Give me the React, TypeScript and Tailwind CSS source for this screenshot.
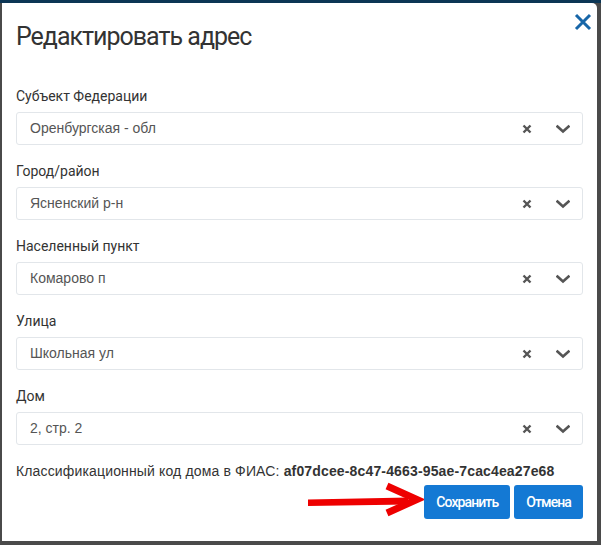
import React from "react";

const fields = [
  { label: "Субъект Федерации", value: "Оренбургская - обл" },
  { label: "Город/район", value: "Ясненский р-н" },
  { label: "Населенный пункт", value: "Комарово п" },
  { label: "Улица", value: "Школьная ул" },
  { label: "Дом", value: "2, стр. 2" },
];

const Chevron = () => (
  <svg width="14" height="10" viewBox="0 0 14 10">
    <path d="M1.5 2.5 L7 7.5 L12.5 2.5" fill="none" stroke="#555" strokeWidth="2.6" strokeLinecap="square" />
  </svg>
);

const Clear = () => (
  <svg width="10" height="10" viewBox="0 0 10 10">
    <path d="M1.5 1.5 L8.5 8.5 M8.5 1.5 L1.5 8.5" stroke="#555" strokeWidth="2.4" />
  </svg>
);

const Field = ({ label, value }: { label: string; value: string }) => (
  <div className="flex flex-col">
    <div className="h-5 text-[14px] leading-5 text-[#333] font-['Roboto',sans-serif]">{label}</div>
    <div className="mt-[6px] h-[33px] flex items-center rounded-[3px] border border-[#e2e6ea] pl-[13px] pr-[12px]">
      <span className="flex-1 text-[14px] text-[#555] font-['Liberation_Sans',sans-serif]">{value}</span>
      <span className="flex items-center justify-center w-[10px] mr-[24px]">
        <Clear />
      </span>
      <Chevron />
    </div>
  </div>
);

export default function App() {
  return (
    <div className="w-[601px] h-[545px] bg-[#4a4a4a] flex flex-col overflow-hidden">
      <div className="h-[3px] bg-[#0c3655] shrink-0" />
      <div className="flex pl-[2px]">
        <div className="w-[595px] h-[538px] bg-white rounded-tr-[5px] flex flex-col px-[14px]">
          <div className="flex items-start">
            <div className="flex-1 mt-[17px] h-[34px] text-[25px] leading-[34px] tracking-[-1px] text-[#333] font-['Roboto',sans-serif]">
              Редактировать адрес
            </div>
            <button className="mt-[10px] mr-[-9px] w-[18px] h-[18px] flex items-center justify-center">
              <svg width="18" height="18" viewBox="0 0 18 18">
                <path d="M2 2 L16 16 M16 2 L2 16" stroke="#1766a8" strokeWidth="3" />
              </svg>
            </button>
          </div>
          <div className="mt-[32px] flex flex-col gap-[16px] w-[567px]">
            {fields.map((f) => (
              <Field key={f.label} label={f.label} value={f.value} />
            ))}
          </div>
          <div className="mt-[16px] h-5 leading-5 text-[14px] tracking-[0.15px] text-[#333] font-['Liberation_Sans',sans-serif]">
            Классификационный код дома в ФИАС: <b>af07dcee-8c47-4663-95ae-7cac4ea27e68</b>
          </div>
          <div className="mt-[4px] flex items-start justify-end gap-[4px] w-[567px]">
            <svg width="112" height="34" viewBox="0 0 112 34" className="overflow-visible">
              <path d="M0 14.5 L100 12.5 L100 19.5 L0 21 Z" fill="#ee0000" />
              <polyline points="79,1 109,14.5 79,28" fill="none" stroke="#ee0000" strokeWidth="7" strokeLinejoin="miter" />
            </svg>
            <button className="h-[34px] px-[12px] rounded-[3px] bg-[#1479d4] text-white text-[14px] font-medium font-['Roboto',sans-serif] tracking-[-0.9px]">
              Сохранить
            </button>
            <button className="h-[34px] px-[12px] rounded-[3px] bg-[#1479d4] text-white text-[14px] font-medium font-['Roboto',sans-serif] tracking-[-0.9px]">
              Отмена
            </button>
          </div>
        </div>
      </div>
    </div>
  );
}
